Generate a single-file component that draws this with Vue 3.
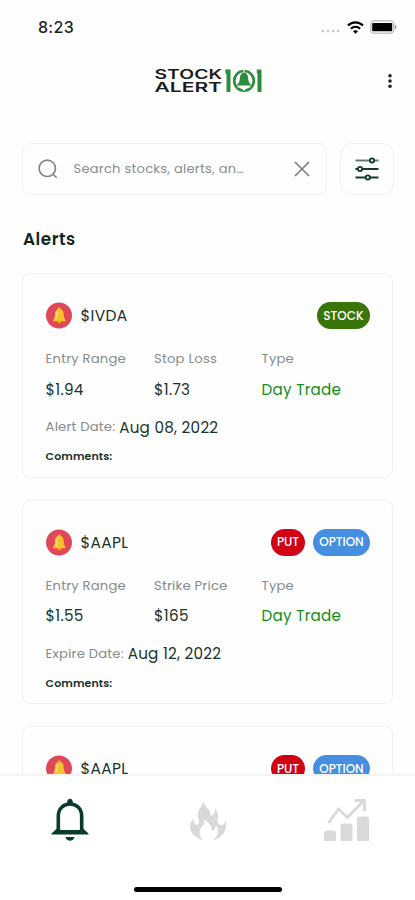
<template>
  <div class="screen">
    <header class="statusBar">
      <span class="clock">8:23</span>
      <div class="statusIcons">
        <svg class="signal" width="20" height="4" viewBox="0 0 20 4">
          <circle v-for="n in 4" :key="n" :cx="n * 5 - 3" cy="2" r="1.3" fill="#c8c8c8" />
        </svg>
        <svg width="17" height="13" viewBox="0 0 17 13" fill="none" stroke="#000" stroke-width="2.2">
          <path d="M1 4.6C5.2.3 11.8.3 16 4.6" />
          <path d="M3.9 7.7C6.5 5.1 10.5 5.1 13.1 7.7" />
          <path d="M8.5 12.8L6 10.2C7.4 8.8 9.6 8.8 11 10.2Z" fill="#000" stroke="none" />
        </svg>
        <svg width="27" height="14" viewBox="0 0 27 14">
          <rect x="0.8" y="0.8" width="23" height="12.4" rx="3.5" fill="#fff" stroke="#c6c6c6" stroke-width="1.6" />
          <rect x="2.2" y="3" width="20" height="8.2" rx="0.8" />
          <path d="M25 4.8C26.8 5.5 26.8 8.5 25 9.2Z" fill="#888" />
        </svg>
      </div>
    </header>

    <div class="topBar">
      <svg class="logo" width="110" height="26" viewBox="0 0 110 26">
        <g class="logoText">
          <text x="0.5" y="10.8" textLength="67.5" lengthAdjust="spacingAndGlyphs">STOCK</text>
          <text x="0.5" y="24" textLength="67.5" lengthAdjust="spacingAndGlyphs">ALERT</text>
        </g>
        <g fill="#2d8b3c">
          <path d="M71.3 1.5H76.5V24H72.5V5.5H71.3Z" />
          <path d="M102.8 1.5H107.5V24H103.5V5.5H102.8Z" />
        </g>
        <circle cx="90" cy="12.8" r="9.8" fill="none" stroke="#2d8b3c" stroke-width="2.6" />
        <path d="M90 4.5C87 5 86 7.5 85.8 11C85.6 14 84 15.5 82.7 17.5H97.3C96 15.5 94.4 14 94.2 11C94 7.5 93 5 90 4.5Z" fill="#2d8b3c" />
        <path d="M83.5 18.9H96.5" stroke="#fff" stroke-width="1" />
        <path d="M87.5 20H92.5L90 23Z" fill="#fff" />
        <path d="M90 1V4.5" stroke="#fff" stroke-width="1.2" />
      </svg>
      <svg class="dots" width="6" height="16" viewBox="0 0 6 16">
        <circle v-for="n in 3" :key="n" cx="3" :cy="n * 5.3 - 2.6" r="1.8" fill="#222" />
      </svg>
    </div>

    <div class="searchRow">
      <div class="searchBox">
        <svg width="20" height="20" viewBox="0 0 20 20" fill="none" stroke="#7b8683" stroke-width="1.6">
          <circle cx="9.3" cy="9.3" r="8.2" />
          <path d="M14.8 15L18.7 18.8" />
        </svg>
        <span class="placeholder">Search stocks, alerts, an…</span>
        <svg width="16" height="16" viewBox="0 0 16 16" stroke="#777d7b" stroke-width="1.6">
          <path d="M1 1L15 15M15 1L1 15" />
        </svg>
      </div>
      <div class="filter">
        <svg width="26" height="26" viewBox="0 0 26 26" fill="#fff" stroke="#123b30" stroke-width="1.9">
          <path d="M1.5 4.5H24.5" stroke="#5b7a72" />
          <path d="M1.5 13H24.5M1.5 21.5H24.5" />
          <circle cx="18" cy="4.5" r="2.1" />
          <circle cx="6" cy="13" r="2.1" />
          <circle cx="13.8" cy="21.5" r="2.1" />
        </svg>
      </div>
    </div>

    <h1>Alerts</h1>

    <main class="list">
      <article v-for="(alert, idx) in alerts" :key="idx" class="card">
        <div class="cardHead">
          <svg width="27" height="27" viewBox="0 0 27 27">
            <circle cx="13" cy="13.5" r="13" fill="#e0485a" />
            <circle cx="13.3" cy="19.5" r="2" fill="#f09a1f" />
            <path d="M13.3 5.5C14.2 5.5 14.7 6.2 14.6 7C17 7.8 17.6 9.8 17.7 12.5C17.8 15.5 18.6 16.6 19.5 18V19.2H7.2V18C8.1 16.6 8.9 15.5 9 12.5C9.1 9.8 9.7 7.8 12 7C11.9 6.2 12.4 5.5 13.3 5.5Z" fill="#fbc02d" />
            <path d="M11.5 9.5C10.5 11.5 11 14.5 9.8 17" fill="none" stroke="#ffe47a" stroke-width="1.5" />
          </svg>
          <span class="ticker">{{ alert.ticker }}</span>
          <span v-for="tag in alert.tags" :key="tag" class="tag" :class="tag.toLowerCase()">{{ tag }}</span>
        </div>
        <div class="grid">
          <span class="label">Entry Range</span>
          <span class="label">{{ alert.priceLabel }}</span>
          <span class="label">Type</span>
          <span class="value">{{ alert.entry }}</span>
          <span class="value">{{ alert.price }}</span>
          <span class="value trade">Day Trade</span>
        </div>
        <p class="date"><span class="label">{{ alert.dateLabel }}</span><span class="day">{{ alert.date }}</span></p>
        <p class="comments">Comments:</p>
      </article>
    </main>

    <nav class="tabs">
      <div class="tabRow">
        <svg width="38" height="44" viewBox="0 0 38 44">
          <path d="M7.3 33.5V18C7.3 10.5 12.5 6 19 6S30.7 10.5 30.7 18V33.5" fill="none" stroke="#0b3b2e" stroke-width="3.6" />
          <path d="M16 5C16 -.8 22 -.8 22 5V7H16ZM6 30.5H32L37.5 35.5V36.5H.5V35.5ZM14.5 39H23.5C22.5 44 15.5 44 14.5 39Z" fill="#0b3b2e" />
          <path d="M9.2 29V32H28.8V29Z" fill="#fff" />
        </svg>
        <svg class="flame" width="37" height="44" viewBox="0 0 37 44" fill="#d9d9d9">
          <path d="M13.5 0C13 6 16.5 9 19 12C20.5 14 20.5 16 20.5 18C24 17 26 14 24.5 10C28.5 14 28.5 18 27.5 21C27 24 28.5 26.5 31 27C34 27 35.5 25 35.5 22C37.5 31 34.5 38.5 23 42.5C28 37.5 30 32.5 26 27.5C25.5 30.5 24.5 32 21.5 33C22 27.5 18.5 24.5 14.5 21.5C15.5 27 9.5 29 9.5 34.5C9.5 38 11 40.5 13.5 42.5C4 39.5 0 34 0 28.5C0 25 1.5 22.5 3.5 21C3.5 24 4.5 26 7 27C11.5 24.5 7 20.5 8 15C9 9.5 14 7 13.5 0Z" />
        </svg>
        <svg width="46" height="44" viewBox="0 0 46 44">
          <path d="M0 43V35.5Q0 32.5 3 32.5H9Q12 32.5 12 35.5V43ZM16.5 43V28.5Q16.5 25.5 19.5 25.5H25.5Q28.5 25.5 28.5 28.5V43ZM33 43V21.5Q33 18.5 36 18.5H42Q45 18.5 45 21.5V43Z" fill="#d9d9d9" />
          <path d="M4.5 25L14.5 11L23.5 19.5L39.5 3M30.5 2.5H40.5V13" fill="none" stroke="#d9d9d9" stroke-width="2.8" />
        </svg>
      </div>
      <div class="homeBar"></div>
    </nav>
  </div>
</template>

<script setup>
import { ref } from "vue";

const option = {
  ticker: "$AAPL",
  tags: ["PUT", "OPTION"],
  priceLabel: "Strike Price",
  entry: "$1.55",
  price: "$165",
  dateLabel: "Expire Date:",
  date: "Aug 12, 2022",
};

const alerts = ref([
  {
    ticker: "$IVDA",
    tags: ["STOCK"],
    priceLabel: "Stop Loss",
    entry: "$1.94",
    price: "$1.73",
    dateLabel: "Alert Date:",
    date: "Aug 08, 2022",
  },
  option,
  { ...option },
]);
</script>

<style>
body {
  background: #fff;
}
</style>

<style scoped>
.screen {
  display: flex;
  flex-direction: column;
  height: 900px;
  overflow: hidden;
  background: #fefefe;
  color: #17322b;
  font-family: Poppins, Inter, sans-serif;
  white-space: nowrap;
}
.statusBar {
  display: flex;
  justify-content: space-between;
  align-items: center;
  height: 54px;
  flex: none;
  padding: 0 18px 0 38px;
}
.clock {
  font-family: Inter, sans-serif;
  font-size: 16px;
  font-weight: 500;
  letter-spacing: 0.3px;
  color: #222;
}
.statusIcons {
  display: flex;
  align-items: center;
  gap: 6px;
}
.signal {
  margin-top: 7px;
}
.topBar {
  display: flex;
  align-items: center;
  height: 54px;
  flex: none;
  padding: 0 22px 0 154px;
  justify-content: space-between;
}
.logoText {
  font-family: Inter, sans-serif;
  font-size: 12.8px;
  font-weight: 600;
  fill: #1c1c1c;
}
.searchRow {
  display: flex;
  gap: 13px;
  height: 52px;
  flex: none;
  margin: 35px 21px 0 22px;
}
.searchBox,
.filter,
.card {
  box-sizing: border-box;
  border: 1.5px solid #f0f1f1;
  border-radius: 8px;
}
.searchBox {
  display: flex;
  align-items: center;
  flex: 1;
  padding: 0 16px 0 15px;
}
.placeholder {
  flex: 1;
  margin-left: 15.5px;
  margin-top: -1px;
  font-size: 13px;
  color: #858e8b;
  letter-spacing: 0.28px;
}
.filter {
  display: flex;
  align-items: center;
  justify-content: center;
  width: 54px;
  border-radius: 12px;
}
h1 {
  margin: 32px 0 0 23px;
  font-size: 16.8px;
  line-height: 24px;
  font-weight: 600;
  letter-spacing: 0.55px;
  color: #0d2620;
}
.list {
  display: flex;
  flex-direction: column;
  gap: 22px;
  flex: 1;
  min-height: 0;
  overflow: hidden;
  padding: 22px 22px 0;
}
.card {
  height: 204.5px;
  flex: none;
  padding: 28px 22px 0 22.6px;
}
.cardHead {
  display: flex;
  align-items: center;
  height: 27px;
}
.ticker {
  flex: 1;
  margin-left: 8px;
  font-size: 15.5px;
  letter-spacing: 0.3px;
}
.tag {
  display: flex;
  align-items: center;
  justify-content: center;
  height: 27px;
  margin-left: 8px;
  border-radius: 14px;
  color: #fff;
  font-size: 12px;
  font-weight: 500;
}
.stock {
  width: 53px;
  background: #397509;
}
.put {
  width: 34px;
  background: #cf0216;
}
.option {
  width: 57px;
  background: #468fe0;
}
.grid {
  display: grid;
  grid-template-columns: 108.5px 107.5px 1fr;
  grid-template-rows: 30px 30px;
  align-items: center;
  margin-top: 15px;
}
.label {
  font-size: 13.2px;
  letter-spacing: 0.18px;
  color: #858c8a;
}
.value {
  font-size: 15.2px;
  letter-spacing: 0.3px;
}
.trade {
  color: #128c20;
  letter-spacing: 0.25px;
}
.date {
  display: flex;
  align-items: center;
  gap: 4px;
  height: 24px;
  margin: 11px 0 0;
}
.day {
  font-size: 15.2px;
  letter-spacing: 0.25px;
}
.comments {
  margin: 9px 0 0;
  font-size: 11px;
  line-height: 16px;
  font-weight: 600;
  letter-spacing: 0.1px;
}
.tabs {
  box-sizing: border-box;
  height: 126px;
  flex: none;
  border-top: 2px solid #f2f3f3;
  background: #fff;
}
.tabRow {
  display: flex;
  justify-content: space-between;
  margin: 22px 45px 0 51px;
}
.flame {
  margin-left: 4px;
}
.homeBar {
  width: 148px;
  height: 5px;
  margin: 45px auto 0;
  border-radius: 3px;
  background: #000;
}
</style>
